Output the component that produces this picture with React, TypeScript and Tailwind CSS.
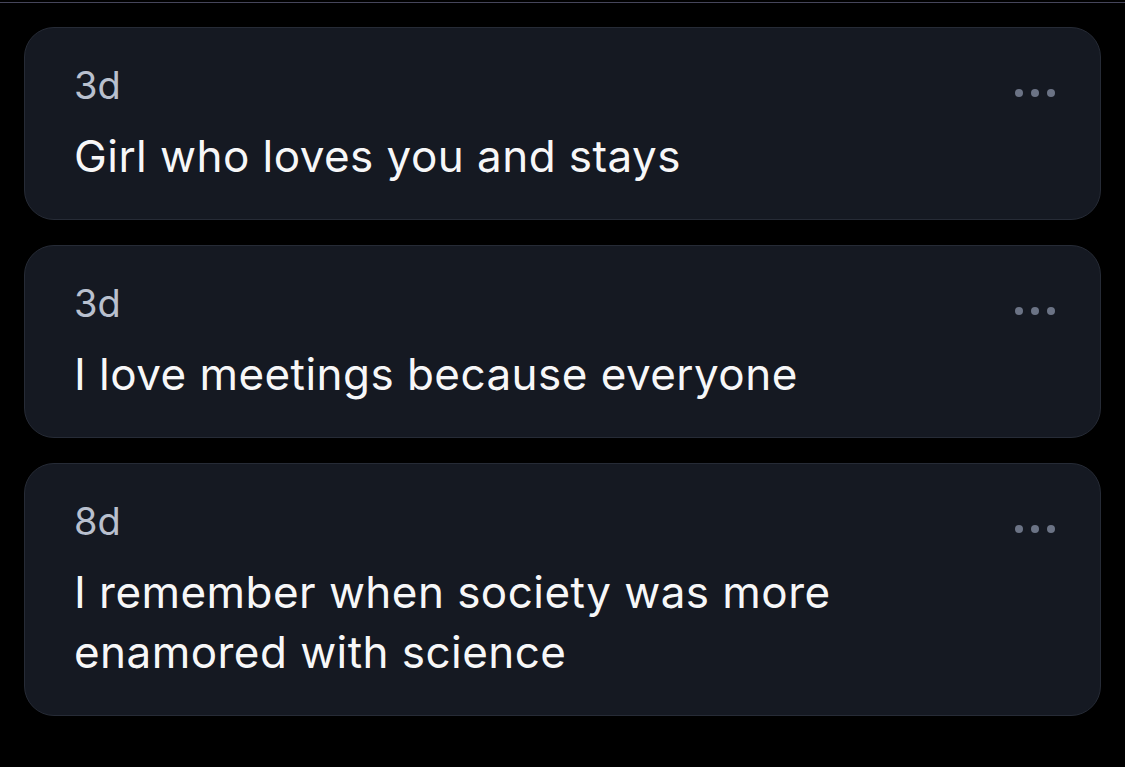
const posts = [
  { age: "3d", text: "Girl who loves you and stays" },
  { age: "3d", text: "I love meetings because everyone" },
  { age: "8d", text: "I remember when society was more enamored with science" },
];

function MoreDots() {
  return (
    <div className="flex items-center gap-[8px] pt-[24px]">
      <span className="w-[8px] h-[8px] rounded-full bg-[#6b7385]" />
      <span className="w-[8px] h-[8px] rounded-full bg-[#6b7385]" />
      <span className="w-[8px] h-[8px] rounded-full bg-[#6b7385]" />
    </div>
  );
}

export default function App() {
  return (
    <div
      className="min-h-[767px] bg-black"
      style={{ fontFamily: "Inter, 'Noto Sans', sans-serif" }}
    >
      <div className="pt-[2px]">
        <div className="h-[1px] bg-[#45455a]" />
      </div>
      <div className="flex flex-col gap-[25px] px-[24px] pt-[24px]">
        {posts.map((post, i) => (
          <article
            key={i}
            className="flex items-start justify-between rounded-[30px] border border-[#262b36] bg-[#151922] pl-[49px] pr-[45px] pt-[37px] pb-[33px]"
          >
            <div className="max-w-[800px]">
              <div className="text-[38px] leading-[40px] text-[#b9c0ce]">
                {post.age}
              </div>
              <p className="mt-[21px] text-[44px] leading-[60px] tracking-[0.45px] text-[#f7f7f8]">
                {post.text}
              </p>
            </div>
            <MoreDots />
          </article>
        ))}
      </div>
    </div>
  );
}
